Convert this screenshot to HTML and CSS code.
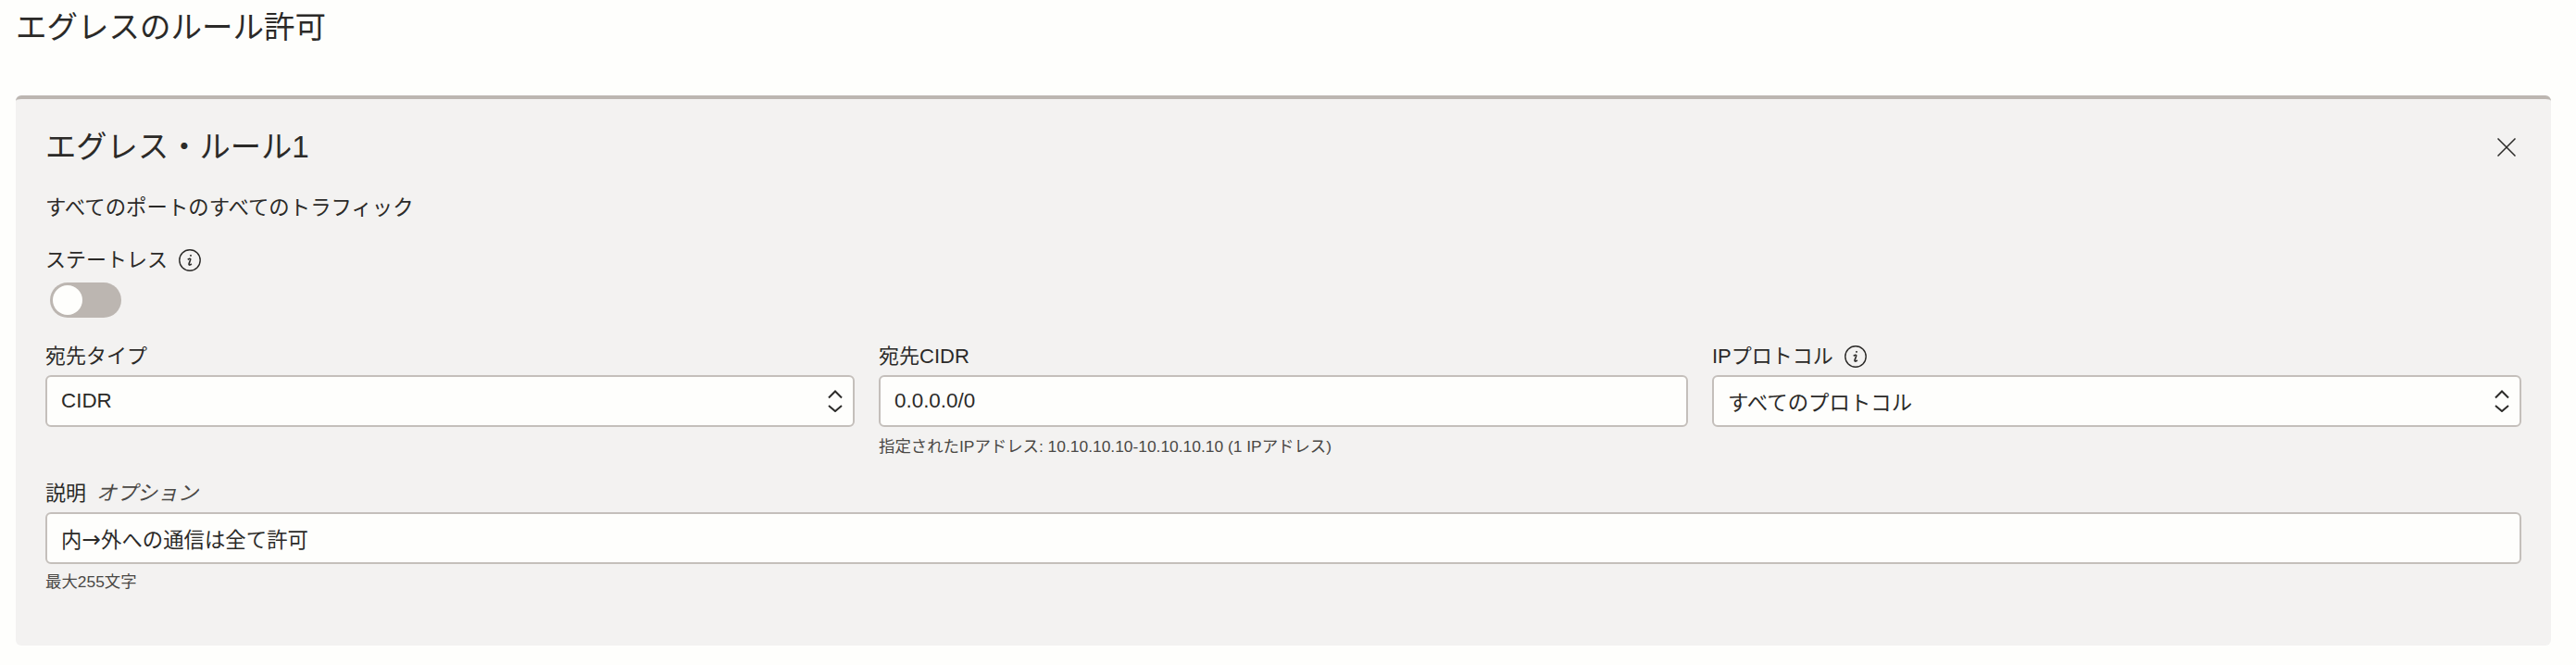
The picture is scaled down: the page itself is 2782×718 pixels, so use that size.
FILE: index.html
```html
<!DOCTYPE html>
<html lang="ja">
<head>
<meta charset="utf-8">
<title>エグレスのルール許可</title>
<link rel="stylesheet" href="styles.css">
</head>
<body>
<h1 class="page-title">エグレスのルール許可</h1>
<section class="panel">
  <div class="panel-head">
    <h2 class="panel-title">エグレス・ルール1</h2>
    <svg class="close" width="20" height="20" viewBox="0 0 20 20"><path d="M0.5 0.5 L19.5 19.5 M19.5 0.5 L0.5 19.5" fill="none" stroke="#2b2a28" stroke-width="1.5"/></svg>
  </div>
  <p class="summary">すべてのポートのすべてのトラフィック</p>
  <div class="label label-stateless">ステートレス
    <svg class="info" width="24" height="24" viewBox="0 0 24 24"><circle cx="12" cy="12" r="11.2" fill="none" stroke="#2b2a28" stroke-width="1.4"/><path d="M13 6 v1.8 M9.8 11.4 c1.2-1.2 2.9-1.6 2.9-.3 c0 1.2-1.7 3.9-1.7 5.2 c0 1.2 1.5 1 2.8-.4" fill="none" stroke="#2b2a28" stroke-width="1.6"/></svg>
  </div>
  <div class="toggle"><span class="knob"></span></div>
  <div class="grid">
    <div class="field">
      <div class="label">宛先タイプ</div>
      <div class="control">CIDR
        <svg class="updown" width="16" height="24" viewBox="0 0 16 24"><path d="M1 8.5 L8 1.5 L15 8.5 M1 17 L8 23 L15 17" fill="none" stroke="#2b2a28" stroke-width="2"/></svg>
      </div>
    </div>
    <div class="field">
      <div class="label">宛先CIDR</div>
      <div class="control">0.0.0.0/0</div>
      <div class="hint">指定されたIPアドレス: 10.10.10.10-10.10.10.10 (1 IPアドレス)</div>
    </div>
    <div class="field">
      <div class="label">IPプロトコル
        <svg class="info" width="24" height="24" viewBox="0 0 24 24"><circle cx="12" cy="12" r="11.2" fill="none" stroke="#2b2a28" stroke-width="1.4"/><path d="M13 6 v1.8 M9.8 11.4 c1.2-1.2 2.9-1.6 2.9-.3 c0 1.2-1.7 3.9-1.7 5.2 c0 1.2 1.5 1 2.8-.4" fill="none" stroke="#2b2a28" stroke-width="1.6"/></svg>
      </div>
      <div class="control">すべてのプロトコル
        <svg class="updown" width="16" height="24" viewBox="0 0 16 24"><path d="M1 8.5 L8 1.5 L15 8.5 M1 17 L8 23 L15 17" fill="none" stroke="#2b2a28" stroke-width="2"/></svg>
      </div>
    </div>
  </div>
  <div class="field field-desc">
    <div class="label">説明<em class="optional">オプション</em></div>
    <div class="control"><span>内<span class="arrow">→</span>外への通信は全て許可</span></div>
    <div class="hint hint-desc">最大255文字</div>
  </div>
</section>
</body>
</html>
```
FILE: styles.css
```css
* { box-sizing: border-box; }
html, body { margin: 0; padding: 0; }
body {
  background: #fefefc;
  color: #2b2a28;
  font-family: "Liberation Sans", "Noto Sans CJK JP", sans-serif;
  padding: 10px 27px 21px 17px;
}
.page-title {
  margin: 0 0 53px;
  font-size: 33.5px;
  line-height: 40px;
  font-weight: 400;
}
.panel {
  background: #f3f2f1;
  border-top: 4px solid #bcb6b1;
  border-radius: 6px;
  padding: 32px 32px 57px 32px;
}
.panel-head {
  display: flex;
  justify-content: space-between;
  align-items: flex-start;
  height: 40px;
  padding-right: 6px;
}
.close { margin-top: 10px; }
.panel-title {
  margin: 0;
  font-size: 33.3px;
  line-height: 40px;
  font-weight: 400;
}
.summary {
  margin: 31px 0 0;
  font-size: 22.4px;
  line-height: 30px;
}
.label {
  display: flex;
  align-items: center;
  gap: 12px;
  font-size: 22px;
  line-height: 28px;
}
.label-stateless {
  margin-top: 29px;
  height: 24px;
}
.info { flex: none; }
.toggle {
  width: 77px;
  height: 38px;
  margin: 12px 0 0 5px;
  padding: 3px;
  background: #bcb6b1;
  border-radius: 19px;
}
.knob {
  display: block;
  width: 32px;
  height: 32px;
  background: #fefefc;
  border-radius: 50%;
}
.grid {
  display: grid;
  grid-template-columns: repeat(3, 1fr);
  column-gap: 26px;
  margin-top: 28px;
}
.control {
  display: flex;
  justify-content: space-between;
  align-items: center;
  height: 56px;
  margin-top: 6px;
  padding: 0 11px 0 15px;
  background: #fefefc;
  border: 2px solid #c4bfbb;
  border-radius: 6px;
  font-size: 22.4px;
}
.arrow { font-family: "DejaVu Sans", sans-serif; font-size: 1.1em; }
.hint {
  margin-top: 9px;
  font-size: 17.4px;
  line-height: 24px;
  color: #4a4845;
}
.field-desc { margin-top: 25px; }
.hint-desc { margin-top: 7px; }
.optional {
  margin-left: -1px;
  color: #4a4845;
  font-style: italic;
}
```
